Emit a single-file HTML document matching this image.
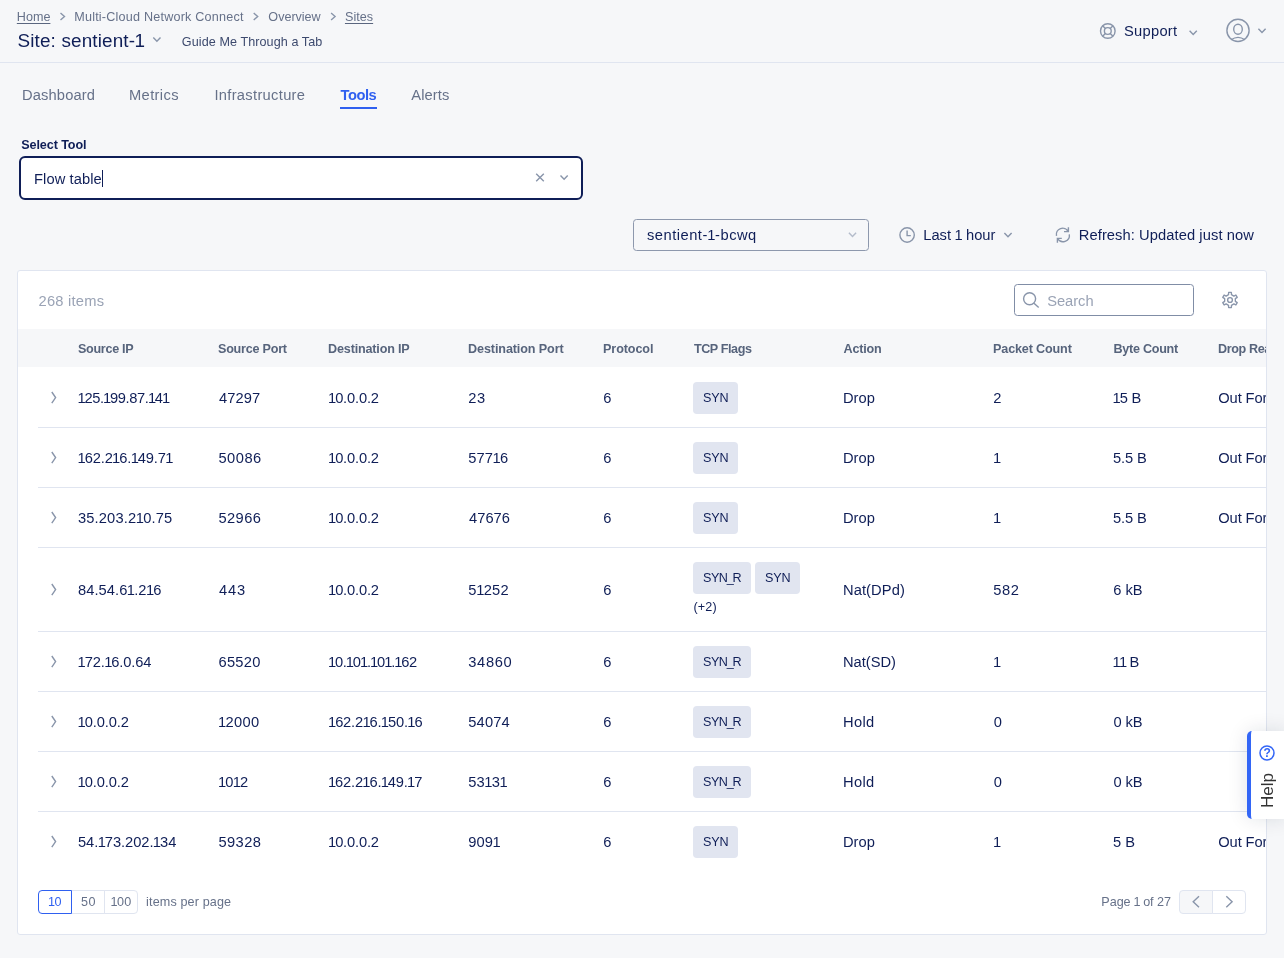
<!DOCTYPE html>
<html lang="en">
<head>
<meta charset="utf-8">
<title>Site: sentient-1</title>
<style>
*{box-sizing:border-box;margin:0;padding:0}
html,body{width:1284px;height:958px;overflow:hidden;background:#f6f7f9}
body{font-family:"Liberation Sans",Arial,sans-serif;color:#0f1e57;position:relative;font-size:14px}
#root{position:absolute;left:0;top:0;width:1284px;height:958px;overflow:hidden;will-change:transform}
.a{position:absolute;white-space:nowrap;line-height:1}
#ico{position:absolute;left:0;top:0;width:1284px;height:958px;pointer-events:none}
#ico path,#ico circle,#ico ellipse{fill:none;stroke:#8995aa;stroke-width:1.4}
#hdrline{left:0;top:62px;width:1284px;height:1px;background:#e0e5f0}
#toolsbar{left:340px;top:107px;width:37px;height:2px;background:#2f60f0}
#box{left:19px;top:156px;width:564px;height:44px;border:2px solid #0f1e57;border-radius:6px;background:#fff}
#caret{left:102px;top:170px;width:1px;height:17px;background:#0f1e57}
#site{left:633px;top:219px;width:236px;height:32px;border:1px solid #8d98ad;border-radius:3.5px}
#card{left:17px;top:270px;width:1250px;height:665px;border:1px solid #e0e5f0;background:#fff;border-radius:3px;overflow:hidden}
#search{left:996px;top:13px;width:180px;height:32px;border:1px solid #808da6;border-radius:3.5px;background:#fff}
#thead{left:0;top:58px;width:1250px;height:38px;background:#f6f7f9}
.sep{left:20px;width:1230px;height:1px;background:#e0e5f0}
.tag{height:32px;border-radius:4px;background:#e1e5f0}
.pbtn{top:619px;height:24px;width:34px;border:1px solid #e0e5f0;background:#fff}
#help{left:1247px;top:731px;width:40px;height:88px;background:#fff;border-left:4px solid #3366f6;border-radius:5px 0 0 5px;box-shadow:0 0 20px rgba(20,30,60,.12)}
#helptxt{left:1259.2px;top:807.8px;font-size:17px;color:#333;transform-origin:0 0;transform:rotate(-90deg)}
</style>
</head>
<body>
<div id="root">
<div class="a" id="hdrline"></div>
<div class="a" id="toolsbar"></div>
<div class="a" id="box"></div>
<div class="a" id="caret"></div>
<div class="a" id="site"></div>
<div class="a" style="left:16.84px;top:11px;font-size:12.6px;letter-spacing:-0.008px;color:#667189;text-decoration:underline;text-underline-offset:2px;text-decoration-thickness:1px;text-decoration-color:#5a667f">Home</div>
<div class="a" style="left:74.24px;top:11px;font-size:12.6px;letter-spacing:0.21px;color:#667189">Multi-Cloud Network Connect</div>
<div class="a" style="left:268.37px;top:11px;font-size:12.6px;letter-spacing:-0.02px;color:#667189">Overview</div>
<div class="a" style="left:344.95px;top:11px;font-size:12.6px;letter-spacing:0.041px;color:#667189;text-decoration:underline;text-underline-offset:2px;text-decoration-thickness:1px;text-decoration-color:#5a667f">Sites</div>
<div class="a" style="left:17.48px;top:32px;font-size:18.9px;letter-spacing:0.146px;color:#0f1e57">Site: sentient-<span style="margin:0 -.06em 0 -.04em">1</span></div>
<div class="a" style="left:181.84px;top:36px;font-size:12.6px;letter-spacing:0.077px;color:#3d4a6e">Guide Me Through a Tab</div>
<div class="a" style="left:1124.05px;top:24px;font-size:14.7px;letter-spacing:0.266px;color:#0f1e57">Support</div>
<div class="a" style="left:22.01px;top:88px;font-size:14.7px;letter-spacing:0.137px;color:#667189">Dashboard</div>
<div class="a" style="left:129.01px;top:88px;font-size:14.7px;letter-spacing:0.37px;color:#667189">Metrics</div>
<div class="a" style="left:214.39px;top:88px;font-size:14.7px;letter-spacing:0.314px;color:#667189">Infrastructure</div>
<div class="a" style="left:340.55px;top:88px;font-size:14.7px;letter-spacing:-0.479px;color:#2f60f0;font-weight:bold">Tools</div>
<div class="a" style="left:411.23px;top:88px;font-size:14.7px;letter-spacing:0.128px;color:#667189">Alerts</div>
<div class="a" style="left:21.25px;top:139px;font-size:12.6px;letter-spacing:-0.095px;color:#0f1e57;font-weight:bold">Select Tool</div>
<div class="a" style="left:34.01px;top:172px;font-size:14.7px;letter-spacing:0.084px;color:#0f1e57">Flow table</div>
<div class="a" style="left:646.94px;top:228px;font-size:14.7px;letter-spacing:0.506px;color:#0f1e57">sentient-<span style="margin:0 -.06em 0 -.04em">1</span>-bcwq</div>
<div class="a" style="left:923.26px;top:228px;font-size:14.7px;letter-spacing:0.009px;color:#0f1e57">Last <span style="margin:0 -.06em 0 -.04em">1</span> hour</div>
<div class="a" style="left:1078.81px;top:228px;font-size:14.7px;letter-spacing:0.081px;color:#0f1e57">Refresh: Updated just now</div>
<div class="a" id="card">
<div class="a" id="search"></div>
<div class="a" id="thead"></div>
<div class="a sep" style="top:156px"></div>
<div class="a sep" style="top:216px"></div>
<div class="a sep" style="top:276px"></div>
<div class="a sep" style="top:360px"></div>
<div class="a sep" style="top:420px"></div>
<div class="a sep" style="top:480px"></div>
<div class="a sep" style="top:540px"></div>
<div class="a tag" style="left:675px;top:111px;width:45px"></div>
<div class="a tag" style="left:675px;top:171px;width:45px"></div>
<div class="a tag" style="left:675px;top:231px;width:45px"></div>
<div class="a tag" style="left:675px;top:291px;width:58px"></div>
<div class="a tag" style="left:737px;top:291px;width:45px"></div>
<div class="a tag" style="left:675px;top:375px;width:58px"></div>
<div class="a tag" style="left:675px;top:435px;width:58px"></div>
<div class="a tag" style="left:675px;top:495px;width:58px"></div>
<div class="a tag" style="left:675px;top:555px;width:45px"></div>
<div class="a pbtn" style="left:53px"></div>
<div class="a pbtn" style="left:86px;border-radius:0 4px 4px 0"></div>
<div class="a pbtn" style="left:20px;border-color:#2f60f0;border-radius:4px 0 0 4px"></div>
<div class="a pbtn" style="left:1161px;border-radius:4px 0 0 4px;background:#f6f7f9"></div>
<div class="a pbtn" style="left:1194px;border-radius:0 4px 4px 0"></div>
<div class="a" style="left:20.52px;top:23px;font-size:14.7px;letter-spacing:0.231px;color:#9aa3b5">268 items</div>
<div class="a" style="left:1029.15px;top:23px;font-size:14.7px;letter-spacing:-0.016px;color:#9aa3b5">Search</div>
<div class="a" style="left:60.00px;top:72px;font-size:12.6px;letter-spacing:-0.31px;color:#57647c;font-weight:bold">Source IP</div>
<div class="a" style="left:200.00px;top:72px;font-size:12.6px;letter-spacing:-0.236px;color:#57647c;font-weight:bold">Source Port</div>
<div class="a" style="left:310.05px;top:72px;font-size:12.6px;letter-spacing:-0.173px;color:#57647c;font-weight:bold">Destination IP</div>
<div class="a" style="left:450.05px;top:72px;font-size:12.6px;letter-spacing:-0.11px;color:#57647c;font-weight:bold">Destination Port</div>
<div class="a" style="left:585.05px;top:72px;font-size:12.6px;letter-spacing:-0.101px;color:#57647c;font-weight:bold">Protocol</div>
<div class="a" style="left:675.88px;top:72px;font-size:12.6px;letter-spacing:-0.41px;color:#57647c;font-weight:bold">TCP Flags</div>
<div class="a" style="left:825.57px;top:72px;font-size:12.6px;letter-spacing:-0.211px;color:#57647c;font-weight:bold">Action</div>
<div class="a" style="left:975.05px;top:72px;font-size:12.6px;letter-spacing:-0.154px;color:#57647c;font-weight:bold">Packet Count</div>
<div class="a" style="left:1095.45px;top:72px;font-size:12.6px;letter-spacing:-0.262px;color:#57647c;font-weight:bold">Byte Count</div>
<div class="a" style="left:1200.05px;top:72px;font-size:12.6px;letter-spacing:-0.396px;color:#57647c;font-weight:bold">Drop Reason</div>
<div class="a" style="left:60.08px;top:120px;font-size:14.7px;letter-spacing:-0.394px;color:#0f1e57"><span style="margin:0 -.06em 0 -.04em">1</span>25.<span style="margin:0 -.06em 0 -.04em">1</span>99.87.<span style="margin:0 -.06em 0 -.04em">1</span>4<span style="margin:0 -.06em 0 -.04em">1</span></div>
<div class="a" style="left:201.11px;top:120px;font-size:14.7px;letter-spacing:0.038px;color:#0f1e57">47297</div>
<div class="a" style="left:310.58px;top:120px;font-size:14.7px;letter-spacing:-0.182px;color:#0f1e57"><span style="margin:0 -.06em 0 -.04em">1</span>0.0.0.2</div>
<div class="a" style="left:450.37px;top:120px;font-size:14.7px;letter-spacing:0.575px;color:#0f1e57">23</div>
<div class="a" style="left:585.25px;top:120px;font-size:14.7px;letter-spacing:0px;color:#0f1e57">6</div>
<div class="a" style="left:824.91px;top:120px;font-size:14.7px;letter-spacing:0.078px;color:#0f1e57">Drop</div>
<div class="a" style="left:975.37px;top:120px;font-size:14.7px;letter-spacing:0px;color:#0f1e57">2</div>
<div class="a" style="left:1095.18px;top:120px;font-size:14.7px;letter-spacing:-0.222px;color:#0f1e57"><span style="margin:0 -.06em 0 -.04em">1</span>5 B</div>
<div class="a" style="left:1200.32px;top:120px;font-size:14.7px;letter-spacing:-0.13px;color:#0f1e57">Out Forwarding</div>
<div class="a" style="left:684.95px;top:121px;font-size:12.6px;letter-spacing:-0.089px;color:#0f1e57">SYN</div>
<div class="a" style="left:60.08px;top:180px;font-size:14.7px;letter-spacing:-0.144px;color:#0f1e57"><span style="margin:0 -.06em 0 -.04em">1</span>62.2<span style="margin:0 -.06em 0 -.04em">1</span>6.<span style="margin:0 -.06em 0 -.04em">1</span>49.7<span style="margin:0 -.06em 0 -.04em">1</span></div>
<div class="a" style="left:200.39px;top:180px;font-size:14.7px;letter-spacing:0.502px;color:#0f1e57">50086</div>
<div class="a" style="left:310.58px;top:180px;font-size:14.7px;letter-spacing:-0.182px;color:#0f1e57"><span style="margin:0 -.06em 0 -.04em">1</span>0.0.0.2</div>
<div class="a" style="left:450.29px;top:180px;font-size:14.7px;letter-spacing:0.11px;color:#0f1e57">577<span style="margin:0 -.06em 0 -.04em">1</span>6</div>
<div class="a" style="left:585.25px;top:180px;font-size:14.7px;letter-spacing:0px;color:#0f1e57">6</div>
<div class="a" style="left:824.91px;top:180px;font-size:14.7px;letter-spacing:0.078px;color:#0f1e57">Drop</div>
<div class="a" style="left:975.58px;top:180px;font-size:14.7px;letter-spacing:0px;color:#0f1e57"><span style="margin:0 -.06em 0 -.04em">1</span></div>
<div class="a" style="left:1095.09px;top:180px;font-size:14.7px;letter-spacing:-0.156px;color:#0f1e57">5.5 B</div>
<div class="a" style="left:1200.32px;top:180px;font-size:14.7px;letter-spacing:-0.13px;color:#0f1e57">Out Forwarding</div>
<div class="a" style="left:684.95px;top:181px;font-size:12.6px;letter-spacing:-0.089px;color:#0f1e57">SYN</div>
<div class="a" style="left:59.93px;top:240px;font-size:14.7px;letter-spacing:0.148px;color:#0f1e57">35.203.2<span style="margin:0 -.06em 0 -.04em">1</span>0.75</div>
<div class="a" style="left:200.39px;top:240px;font-size:14.7px;letter-spacing:0.439px;color:#0f1e57">52966</div>
<div class="a" style="left:310.58px;top:240px;font-size:14.7px;letter-spacing:-0.182px;color:#0f1e57"><span style="margin:0 -.06em 0 -.04em">1</span>0.0.0.2</div>
<div class="a" style="left:451.01px;top:240px;font-size:14.7px;letter-spacing:0.034px;color:#0f1e57">47676</div>
<div class="a" style="left:585.25px;top:240px;font-size:14.7px;letter-spacing:0px;color:#0f1e57">6</div>
<div class="a" style="left:824.91px;top:240px;font-size:14.7px;letter-spacing:0.078px;color:#0f1e57">Drop</div>
<div class="a" style="left:975.58px;top:240px;font-size:14.7px;letter-spacing:0px;color:#0f1e57"><span style="margin:0 -.06em 0 -.04em">1</span></div>
<div class="a" style="left:1095.09px;top:240px;font-size:14.7px;letter-spacing:-0.156px;color:#0f1e57">5.5 B</div>
<div class="a" style="left:1200.32px;top:240px;font-size:14.7px;letter-spacing:-0.13px;color:#0f1e57">Out Forwarding</div>
<div class="a" style="left:684.95px;top:241px;font-size:12.6px;letter-spacing:-0.089px;color:#0f1e57">SYN</div>
<div class="a" style="left:59.99px;top:312px;font-size:14.7px;letter-spacing:0.06px;color:#0f1e57">84.54.6<span style="margin:0 -.06em 0 -.04em">1</span>.2<span style="margin:0 -.06em 0 -.04em">1</span>6</div>
<div class="a" style="left:201.11px;top:312px;font-size:14.7px;letter-spacing:0.818px;color:#0f1e57">443</div>
<div class="a" style="left:310.58px;top:312px;font-size:14.7px;letter-spacing:-0.182px;color:#0f1e57"><span style="margin:0 -.06em 0 -.04em">1</span>0.0.0.2</div>
<div class="a" style="left:450.29px;top:312px;font-size:14.7px;letter-spacing:0.24px;color:#0f1e57">5<span style="margin:0 -.06em 0 -.04em">1</span>252</div>
<div class="a" style="left:585.25px;top:312px;font-size:14.7px;letter-spacing:0px;color:#0f1e57">6</div>
<div class="a" style="left:824.91px;top:312px;font-size:14.7px;letter-spacing:0.117px;color:#0f1e57">Nat(DPd)</div>
<div class="a" style="left:975.29px;top:312px;font-size:14.7px;letter-spacing:0.53px;color:#0f1e57">582</div>
<div class="a" style="left:1095.15px;top:312px;font-size:14.7px;letter-spacing:0.005px;color:#0f1e57">6 kB</div>
<div class="a" style="left:684.95px;top:301px;font-size:12.6px;letter-spacing:-0.447px;color:#0f1e57">SYN<span style="margin:0 -.06em">_</span>R</div>
<div class="a" style="left:746.95px;top:301px;font-size:12.6px;letter-spacing:-0.089px;color:#0f1e57">SYN</div>
<div class="a" style="left:675.40px;top:330px;font-size:12.6px;letter-spacing:0.144px;color:#0f1e57">(+2)</div>
<div class="a" style="left:60.08px;top:384px;font-size:14.7px;letter-spacing:-0.127px;color:#0f1e57"><span style="margin:0 -.06em 0 -.04em">1</span>72.<span style="margin:0 -.06em 0 -.04em">1</span>6.0.64</div>
<div class="a" style="left:200.45px;top:384px;font-size:14.7px;letter-spacing:0.283px;color:#0f1e57">65520</div>
<div class="a" style="left:310.58px;top:384px;font-size:14.7px;letter-spacing:-0.372px;color:#0f1e57"><span style="margin:0 -.06em 0 -.04em">1</span>0.<span style="margin:0 -.06em 0 -.04em">1</span>0<span style="margin:0 -.06em 0 -.04em">1</span>.<span style="margin:0 -.06em 0 -.04em">1</span>0<span style="margin:0 -.06em 0 -.04em">1</span>.<span style="margin:0 -.06em 0 -.04em">1</span>62</div>
<div class="a" style="left:450.23px;top:384px;font-size:14.7px;letter-spacing:0.663px;color:#0f1e57">34860</div>
<div class="a" style="left:585.25px;top:384px;font-size:14.7px;letter-spacing:0px;color:#0f1e57">6</div>
<div class="a" style="left:824.91px;top:384px;font-size:14.7px;letter-spacing:0.003px;color:#0f1e57">Nat(SD)</div>
<div class="a" style="left:975.58px;top:384px;font-size:14.7px;letter-spacing:0px;color:#0f1e57"><span style="margin:0 -.06em 0 -.04em">1</span></div>
<div class="a" style="left:1095.18px;top:384px;font-size:14.7px;letter-spacing:-0.439px;color:#0f1e57"><span style="margin:0 -.06em 0 -.04em">1</span><span style="margin:0 -.06em 0 -.04em">1</span> B</div>
<div class="a" style="left:684.95px;top:385px;font-size:12.6px;letter-spacing:-0.447px;color:#0f1e57">SYN<span style="margin:0 -.06em">_</span>R</div>
<div class="a" style="left:60.08px;top:444px;font-size:14.7px;letter-spacing:-0.11px;color:#0f1e57"><span style="margin:0 -.06em 0 -.04em">1</span>0.0.0.2</div>
<div class="a" style="left:200.48px;top:444px;font-size:14.7px;letter-spacing:0.324px;color:#0f1e57"><span style="margin:0 -.06em 0 -.04em">1</span>2000</div>
<div class="a" style="left:310.58px;top:444px;font-size:14.7px;letter-spacing:-0.181px;color:#0f1e57"><span style="margin:0 -.06em 0 -.04em">1</span>62.2<span style="margin:0 -.06em 0 -.04em">1</span>6.<span style="margin:0 -.06em 0 -.04em">1</span>50.<span style="margin:0 -.06em 0 -.04em">1</span>6</div>
<div class="a" style="left:450.29px;top:444px;font-size:14.7px;letter-spacing:0.158px;color:#0f1e57">54074</div>
<div class="a" style="left:585.25px;top:444px;font-size:14.7px;letter-spacing:0px;color:#0f1e57">6</div>
<div class="a" style="left:824.91px;top:444px;font-size:14.7px;letter-spacing:0.369px;color:#0f1e57">Hold</div>
<div class="a" style="left:975.77px;top:444px;font-size:14.7px;letter-spacing:0px;color:#0f1e57">0</div>
<div class="a" style="left:1095.57px;top:444px;font-size:14.7px;letter-spacing:-0.135px;color:#0f1e57">0 kB</div>
<div class="a" style="left:684.95px;top:445px;font-size:12.6px;letter-spacing:-0.447px;color:#0f1e57">SYN<span style="margin:0 -.06em">_</span>R</div>
<div class="a" style="left:60.08px;top:504px;font-size:14.7px;letter-spacing:-0.11px;color:#0f1e57"><span style="margin:0 -.06em 0 -.04em">1</span>0.0.0.2</div>
<div class="a" style="left:200.48px;top:504px;font-size:14.7px;letter-spacing:-0.024px;color:#0f1e57"><span style="margin:0 -.06em 0 -.04em">1</span>0<span style="margin:0 -.06em 0 -.04em">1</span>2</div>
<div class="a" style="left:310.58px;top:504px;font-size:14.7px;letter-spacing:-0.195px;color:#0f1e57"><span style="margin:0 -.06em 0 -.04em">1</span>62.2<span style="margin:0 -.06em 0 -.04em">1</span>6.<span style="margin:0 -.06em 0 -.04em">1</span>49.<span style="margin:0 -.06em 0 -.04em">1</span>7</div>
<div class="a" style="left:450.29px;top:504px;font-size:14.7px;letter-spacing:0.106px;color:#0f1e57">53<span style="margin:0 -.06em 0 -.04em">1</span>3<span style="margin:0 -.06em 0 -.04em">1</span></div>
<div class="a" style="left:585.25px;top:504px;font-size:14.7px;letter-spacing:0px;color:#0f1e57">6</div>
<div class="a" style="left:824.91px;top:504px;font-size:14.7px;letter-spacing:0.369px;color:#0f1e57">Hold</div>
<div class="a" style="left:975.77px;top:504px;font-size:14.7px;letter-spacing:0px;color:#0f1e57">0</div>
<div class="a" style="left:1095.57px;top:504px;font-size:14.7px;letter-spacing:-0.135px;color:#0f1e57">0 kB</div>
<div class="a" style="left:684.95px;top:505px;font-size:12.6px;letter-spacing:-0.447px;color:#0f1e57">SYN<span style="margin:0 -.06em">_</span>R</div>
<div class="a" style="left:59.99px;top:564px;font-size:14.7px;letter-spacing:-0.067px;color:#0f1e57">54.<span style="margin:0 -.06em 0 -.04em">1</span>73.202.<span style="margin:0 -.06em 0 -.04em">1</span>34</div>
<div class="a" style="left:200.39px;top:564px;font-size:14.7px;letter-spacing:0.431px;color:#0f1e57">59328</div>
<div class="a" style="left:310.58px;top:564px;font-size:14.7px;letter-spacing:-0.182px;color:#0f1e57"><span style="margin:0 -.06em 0 -.04em">1</span>0.0.0.2</div>
<div class="a" style="left:450.30px;top:564px;font-size:14.7px;letter-spacing:0.055px;color:#0f1e57">909<span style="margin:0 -.06em 0 -.04em">1</span></div>
<div class="a" style="left:585.25px;top:564px;font-size:14.7px;letter-spacing:0px;color:#0f1e57">6</div>
<div class="a" style="left:824.91px;top:564px;font-size:14.7px;letter-spacing:0.078px;color:#0f1e57">Drop</div>
<div class="a" style="left:975.58px;top:564px;font-size:14.7px;letter-spacing:0px;color:#0f1e57"><span style="margin:0 -.06em 0 -.04em">1</span></div>
<div class="a" style="left:1095.09px;top:564px;font-size:14.7px;letter-spacing:-0.006px;color:#0f1e57">5 B</div>
<div class="a" style="left:1200.32px;top:564px;font-size:14.7px;letter-spacing:-0.13px;color:#0f1e57">Out Forwarding</div>
<div class="a" style="left:684.95px;top:565px;font-size:12.6px;letter-spacing:-0.089px;color:#0f1e57">SYN</div>
<div class="a" style="left:30.50px;top:625px;font-size:12.6px;letter-spacing:0.245px;color:#2f60f0"><span style="margin:0 -.06em 0 -.04em">1</span>0</div>
<div class="a" style="left:62.93px;top:625px;font-size:12.6px;letter-spacing:0.499px;color:#667189">50</div>
<div class="a" style="left:93.05px;top:625px;font-size:12.6px;letter-spacing:0.173px;color:#667189"><span style="margin:0 -.06em 0 -.04em">1</span>00</div>
<div class="a" style="left:128.08px;top:625px;font-size:12.6px;letter-spacing:0.132px;color:#667189">items per page</div>
<div class="a" style="left:1083.34px;top:625px;font-size:12.6px;letter-spacing:-0.049px;color:#667189">Page <span style="margin:0 -.06em 0 -.04em">1</span> of 27</div>
</div>
<svg id="ico" viewBox="0 0 1284 958">
<!-- breadcrumb chevrons -->
<path d="M60.5 13 L64.5 16.5 L60.5 20"/>
<path d="M253.7 13 L257.7 16.5 L253.7 20"/>
<path d="M331.1 13 L335.1 16.5 L331.1 20"/>
<!-- title chevron -->
<path d="M153.3 37.5 L156.9 41.3 L160.5 37.5"/>
<!-- support -->
<circle cx="1107.8" cy="31" r="7.3"/><circle cx="1107.8" cy="31" r="3.4"/>
<path d="M1102.6 25.8 L1105.4 28.6 M1113 25.8 L1110.2 28.6 M1102.6 36.2 L1105.4 33.4 M1113 36.2 L1110.2 33.4"/>
<path d="M1189.6 30.7 L1193.2 34.5 L1196.8 30.7"/>
<!-- user -->
<circle cx="1238" cy="30.4" r="11.1"/>
<ellipse cx="1238" cy="29.3" rx="4.3" ry="5"/>
<path d="M1231.1 39.8 Q1238 35 1244.9 39.8"/>
<path d="M1258.4 28.8 L1262.0 32.6 L1265.6 28.8"/>
<!-- select x + chevron -->
<path d="M536.2 173.7 L543.8 181.3 M543.8 173.7 L536.2 181.3"/>
<path d="M560.5 175.5 L564.1 179.3 L567.7 175.5"/>
<path d="M848.9 232.8 L852.5 236.6 L856.1 232.8" style="stroke:#b4bccb"/>
<!-- clock -->
<circle cx="907.1" cy="235" r="7.2"/>
<path d="M907.1 230.6 V235.6 H910.8"/>
<path d="M1004.4 232.9 L1008.0 236.7 L1011.6 232.9"/>
<!-- refresh -->
<path d="M1056.5 235.8 A6.3 6.3 0 0 1 1068.2 231.5 M1068.4 227.3 V231.6 H1064 M1069.3 234.4 A6.3 6.3 0 0 1 1057.6 238.5 M1057.4 242.7 V238.4 H1061.8"/>
<!-- magnifier -->
<circle cx="1029.6" cy="298.8" r="6"/>
<path d="M1034 303.2 L1038.7 307.6"/>
<!-- gear -->
<path d="M1231.48 294.70 L1231.36 292.42 L1228.64 292.42 L1228.52 294.70 L1226.15 296.07 L1224.12 295.03 L1222.76 297.39 L1224.67 298.63 L1224.67 301.37 L1222.76 302.61 L1224.12 304.97 L1226.15 303.93 L1228.52 305.30 L1228.64 307.58 L1231.36 307.58 L1231.48 305.30 L1233.85 303.93 L1235.88 304.97 L1237.24 302.61 L1235.33 301.37 L1235.33 298.63 L1237.24 297.39 L1235.88 295.03 L1233.85 296.07 Z" style="stroke-width:1.35;stroke-linejoin:round"/>
<circle cx="1230" cy="300" r="2.4"/>
<path d="M51.8 392.0 L55.6 397.6 L51.8 403.2"/>
<path d="M51.8 452.0 L55.6 457.6 L51.8 463.2"/>
<path d="M51.8 512.0 L55.6 517.6 L51.8 523.2"/>
<path d="M51.8 584.0 L55.6 589.6 L51.8 595.2"/>
<path d="M51.8 656.0 L55.6 661.6 L51.8 667.2"/>
<path d="M51.8 716.0 L55.6 721.6 L51.8 727.2"/>
<path d="M51.8 776.0 L55.6 781.6 L51.8 787.2"/>
<path d="M51.8 836.0 L55.6 841.6 L51.8 847.2"/>
<!-- pager chevrons -->
<path d="M1199 896.3 L1193.2 901.8 L1199 907.3"/>
<path d="M1226.3 896.3 L1232.1 901.8 L1226.3 907.3"/>
</svg>
<div class="a" id="help"></div>
<svg class="a" style="left:1259px;top:745px" width="16" height="16" viewBox="0 0 16 16"><circle cx="8" cy="8" r="7" fill="none" stroke="#3366f6" stroke-width="1.5"/></svg>
<div class="a" style="left:1263.6px;top:747px;font-size:12px;font-weight:bold;color:#3366f6">?</div>
<div class="a" id="helptxt">Help</div>
</div>
</body>
</html>
